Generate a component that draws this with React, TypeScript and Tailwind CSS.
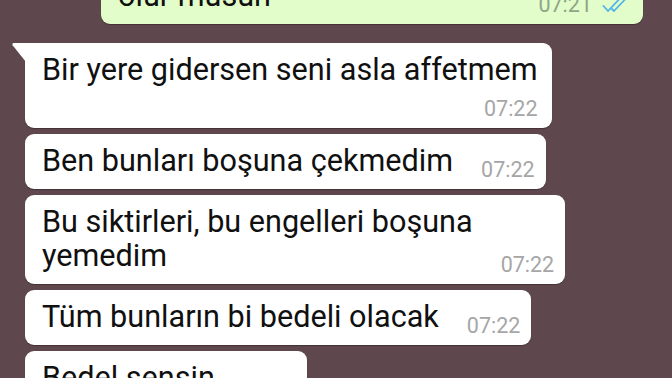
import React from "react";

const Time = ({ t, cls = "" }: { t: string; cls?: string }) => (
  <span className={`text-[21.5px] leading-[24px] text-[#a6a6a6] whitespace-nowrap ${cls}`}>{t}</span>
);

const Bubble = ({ children, tail = false }: { children: React.ReactNode; tail?: boolean }) => (
  <div
    className={`relative self-start bg-white ${tail ? "rounded-r-[9px] rounded-bl-[9px]" : "rounded-[9px]"} shadow-[0_1px_1px_rgba(0,0,0,0.3)]`}
  >
    {tail && (
      <svg className="absolute left-[-13px] top-0" width="14" height="19" viewBox="0 0 14 19">
        <path d="M1.5 0 H14 V19 L0.6 2.2 Q0 0 1.5 0 Z" fill="#ffffff" />
      </svg>
    )}
    {children}
  </div>
);

const Inline = ({ text, time }: { text: React.ReactNode; time: string }) => (
  <div className="flex items-end pl-[17px] pr-[11px] pt-[10px] pb-[7px]">
    <div className="text-[30.6px] leading-[34px] text-[#101010] mb-[4px] whitespace-nowrap">{text}</div>
    <Time t={time} cls="ml-[28px]" />
  </div>
);

export default function App() {
  return (
    <div className="w-[672px] h-[378px] overflow-hidden bg-[#5f474e] font-[Roboto,sans-serif] flex flex-col">
      <div className="self-end mr-[29px] mt-[-31px] w-[542px] bg-[#e2fdca] rounded-[9px] shadow-[0_1px_1px_rgba(0,0,0,0.3)] flex items-end justify-between pl-[17px] pr-[14px] pt-[10px] pb-[7px]">
        <div className="text-[30.6px] leading-[34px] text-[#101010] mb-[4px]">olur musun</div>
        <div className="flex items-center gap-[10px]">
          <span className="text-[21.5px] leading-[24px] text-[#8fa586]">07:21</span>
          <svg width="27" height="15" viewBox="0 0 27 15" fill="none" stroke="#4fb3ea" strokeWidth="1.8" strokeLinecap="round" strokeLinejoin="round">
            <path d="M1.5 8 L6 13 L17 1.5" />
            <path d="M10 11 L12 13 L23 1.5" />
          </svg>
        </div>
      </div>

      <div className="flex flex-col gap-[6px] pl-[25px] mt-[19px]">
        <Bubble tail>
          <div className="flex flex-col pl-[17px] pr-[14px] pt-[10px] pb-[7px]">
            <div className="text-[30.6px] leading-[34px] text-[#101010] whitespace-nowrap">Bir yere gidersen seni asla affetmem</div>
            <Time t="07:22" cls="self-end mt-[10px]" />
          </div>
        </Bubble>
        <Bubble>
          <Inline text="Ben bunları boşuna çekmedim" time="07:22" />
        </Bubble>
        <Bubble>
          <Inline
            text={
              <>
                Bu siktirleri, bu engelleri boşuna
                <br />
                yemedim
              </>
            }
            time="07:22"
          />
        </Bubble>
        <Bubble>
          <Inline text="Tüm bunların bi bedeli olacak" time="07:22" />
        </Bubble>
        <Bubble>
          <Inline text="Bedel sensin" time="07:22" />
        </Bubble>
      </div>
    </div>
  );
}
